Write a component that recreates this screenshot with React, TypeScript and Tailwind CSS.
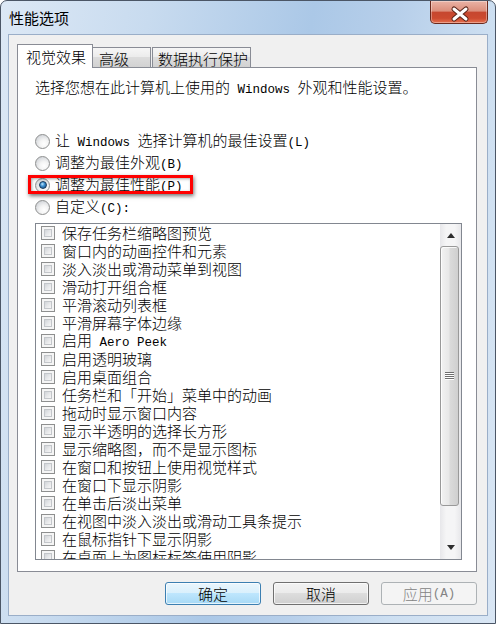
import React from "react";

function Lat({ children }: { children: React.ReactNode }) {
  return <span className="font-['Liberation_Mono',monospace] text-[12.5px]">{children}</span>;
}

function Radio({ checked }: { checked?: boolean }) {
  return (
    <span className="flex h-[15px] w-[15px] shrink-0 items-center justify-center rounded-full border border-[#8e8f8f] bg-[radial-gradient(circle_at_62%_68%,#ffffff_0%,#f4f4f4_35%,#d5d8dc_75%,#c4c8cc_100%)]">
      {checked && (
        <span className="h-[8px] w-[8px] rounded-full border border-[#183a5c] bg-[radial-gradient(circle_at_40%_35%,#bfe6fb_0%,#3d8fd0_40%,#12467c_100%)]" />
      )}
    </span>
  );
}

function Check() {
  return (
    <span className="flex h-[14px] w-[14px] shrink-0 border border-[#8e8f8f] bg-[#f5f5f5] p-[2px]">
      <span className="flex-1 border border-[#c3c6ca] bg-[linear-gradient(135deg,#d2d5d9_0%,#e6e7e9_50%,#f7f7f7_100%)]" />
    </span>
  );
}

const items: React.ReactNode[] = [
  "保存任务栏缩略图预览",
  "窗口内的动画控件和元素",
  "淡入淡出或滑动菜单到视图",
  "滑动打开组合框",
  "平滑滚动列表框",
  "平滑屏幕字体边缘",
  <>启用<Lat> Aero Peek</Lat></>,
  "启用透明玻璃",
  "启用桌面组合",
  "任务栏和「开始」菜单中的动画",
  "拖动时显示窗口内容",
  "显示半透明的选择长方形",
  "显示缩略图，而不是显示图标",
  "在窗口和按钮上使用视觉样式",
  "在窗口下显示阴影",
  "在单击后淡出菜单",
  "在视图中淡入淡出或滑动工具条提示",
  "在鼠标指针下显示阴影",
  "在桌面上为图标标签使用阴影",
];

export default function App() {
  return (
    <div className="h-[624px] w-[496px] overflow-hidden bg-white font-['Noto_Sans_CJK_SC',sans-serif] text-[15px] font-light text-black">
      <div className="flex h-[624px] w-[496px] flex-col rounded-t-[7px] border border-[#4b5666] bg-[linear-gradient(100deg,#dce8f5_0%,#c8dbef_25%,#abc8e7_52%,#b7cfea_66%,#cddff1_82%,#d9e6f4_100%)]">
        {/* title bar */}
        <div className="flex h-[33px] shrink-0 items-start justify-between pl-[8px] pr-[7px]">
          <div className="pt-[7px] text-[15px] font-normal leading-[20px] text-black">性能选项</div>
          <div className="h-[23px] w-[58px] rounded-b-[5px] border border-t-0 border-[#6a291d] bg-[linear-gradient(to_bottom,#eab3a6_0%,#dc8f7c_45%,#c6472f_52%,#cc4a2f_78%,#e5704f_100%)] shadow-[inset_0_0_0_1px_rgba(255,255,255,0.35)]">
            <svg width="58" height="23" viewBox="0 0 58 23">
              <path d="M23 8 L35 18 M35 8 L23 18" stroke="#5a2418" strokeWidth="5" strokeLinecap="round" />
              <path d="M23 8 L35 18 M35 8 L23 18" stroke="#ffffff" strokeWidth="3" strokeLinecap="round" />
            </svg>
          </div>
        </div>

        {/* client area */}
        <div className="mx-[7px] mb-[7px] flex flex-1 flex-col border border-[#9aaec8] bg-[#f0f0f0] pl-[8px] pr-[10px] pt-[9px]">
          {/* tabs */}
          <div className="flex h-[23px] items-end">
            <div className="relative z-10 -mb-px h-[24px] w-[76px] border border-b-0 border-[#898c95] bg-white pl-[8px] leading-[23px]">
              视觉效果
            </div>
            <div className="-ml-px h-[20px] w-[59px] border border-b-0 border-[#898c95] bg-[linear-gradient(to_bottom,#f6f6f6_0%,#ebebeb_50%,#dcdcdc_50%,#d2d2d2_100%)] pl-[6px] leading-[21px]">
              高级
            </div>
            <div className="ml-px h-[20px] w-[99px] border border-b-0 border-[#898c95] bg-[linear-gradient(to_bottom,#f6f6f6_0%,#ebebeb_50%,#dcdcdc_50%,#d2d2d2_100%)] pl-[5px] leading-[21px]">
              数据执行保护
            </div>
          </div>

          {/* panel */}
          <div className="flex h-[505px] w-[460px] flex-col border border-[#898c95] bg-white">
            <div className="mt-[10px] pl-[17px] leading-[18px]">
              选择您想在此计算机上使用的<Lat> Windows </Lat>外观和性能设置。
            </div>

            <div className="mt-[31px] flex flex-col">
              <div className="flex h-[22px] items-center gap-[5px] pl-[17px]">
                <Radio />
                <span className="leading-[18px]">让<Lat> Windows </Lat>选择计算机的最佳设置<Lat>(L)</Lat></span>
              </div>
              <div className="flex h-[22px] items-center gap-[5px] pl-[17px]">
                <Radio />
                <span className="leading-[18px]">调整为最佳外观<Lat>(B)</Lat></span>
              </div>
              <div className="relative flex h-[22px] items-center gap-[5px] pl-[17px]">
                <Radio checked />
                <span className="leading-[18px]">调整为最佳性能<Lat>(P)</Lat></span>
                <div className="absolute left-[10px] top-[1px] h-[19px] w-[165px] border-[3px] border-[#ff0000] shadow-[1px_2px_4px_rgba(0,0,0,0.55),inset_1px_1px_3px_rgba(0,0,0,0.35)]" />
              </div>
              <div className="flex h-[22px] items-center gap-[5px] pl-[17px]">
                <Radio />
                <span className="leading-[18px]">自定义<Lat>(C):</Lat></span>
              </div>
            </div>

            {/* list box */}
            <div className="ml-[17px] mt-[5px] flex h-[337px] w-[427px] border border-[#828790] bg-white">
              <div className="flex flex-1 flex-col overflow-hidden">
                {items.map((it, i) => (
                  <div key={i} className="flex h-[18px] shrink-0 items-center pl-[5px]">
                    <Check />
                    <span className="ml-[7px] whitespace-nowrap leading-[18px]">{it}</span>
                  </div>
                ))}
              </div>
              {/* scrollbar */}
              <div className="flex w-[21px] flex-col bg-[linear-gradient(to_right,#e7e7ea_0%,#f5f5f6_30%,#f5f5f6_70%,#e7e7ea_100%)]">
                <div className="flex h-[22px] items-center justify-center">
                  <svg width="8" height="5" viewBox="0 0 8 5">
                    <path d="M0 5 L4 0 L8 5 Z" fill="#2e2e2e" />
                  </svg>
                </div>
                <div className="ml-0 mr-[2px] flex h-[260px] items-center justify-center rounded-[3px] border border-[#999999] bg-[linear-gradient(to_right,#f2f2f2_0%,#e8e8e8_45%,#dadada_55%,#cfcfcf_100%)] shadow-[inset_1px_1px_0_rgba(255,255,255,0.8)]">
                  <svg width="9" height="8" viewBox="0 0 9 8">
                    <path d="M0 0.5 H9 M0 2.5 H9 M0 4.5 H9 M0 6.5 H9" stroke="#6f6f6f" strokeWidth="1" />
                    <path d="M0 1.5 H9 M0 3.5 H9 M0 5.5 H9 M0 7.5 H9" stroke="#ffffff" strokeWidth="1" />
                  </svg>
                </div>
                <div className="flex-1" />
                <div className="flex h-[21px] items-center justify-center pb-[2px]">
                  <svg width="8" height="5" viewBox="0 0 8 5">
                    <path d="M0 0 L8 0 L4 5 Z" fill="#2e2e2e" />
                  </svg>
                </div>
              </div>
            </div>
          </div>

          {/* buttons */}
          <div className="mt-[10px] flex justify-end gap-[12px]">
            <div className="flex h-[23px] w-[96px] items-center justify-center rounded-[3px] border border-[#3c7fb1] bg-[linear-gradient(to_bottom,#eaf6fd_0%,#d9f0fc_50%,#bee6fd_50%,#a7d9f5_100%)] shadow-[inset_0_0_0_1px_rgba(255,255,255,0.7)] leading-[18px]">
              确定
            </div>
            <div className="flex h-[23px] w-[96px] items-center justify-center rounded-[3px] border border-[#707070] bg-[linear-gradient(to_bottom,#f2f2f2_0%,#ebebeb_50%,#dddddd_50%,#cfcfcf_100%)] shadow-[inset_0_0_0_1px_rgba(255,255,255,0.7)] leading-[18px]">
              取消
            </div>
            <div className="flex h-[23px] w-[96px] items-center justify-center rounded-[3px] border border-[#adb2b5] bg-[#f4f4f4] leading-[18px] text-[#838383]">
              应用<Lat>(A)</Lat>
            </div>
          </div>
        </div>
      </div>
    </div>
  );
}
